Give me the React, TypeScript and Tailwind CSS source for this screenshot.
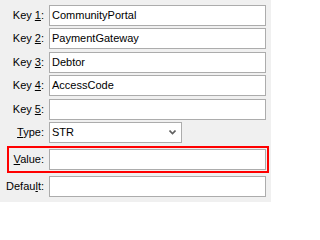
import React from 'react';

const FONT = { fontFamily: '"Liberation Sans", Arial, sans-serif' };

const Label: React.FC<{ pre: string; key_: string; post: string; w: string }> = ({ pre, key_, post, w }) => (
  <span className={`${w} text-right text-[11px] text-black leading-none whitespace-pre`}>
    {pre}
    <u className="underline-offset-[1px]">{key_}</u>
    {post}
  </span>
);

const TextBox: React.FC<{ value?: string }> = ({ value }) => (
  <div className="w-[217px] h-[21px] bg-white border border-[#acacac] flex items-center px-[2px] text-[11px] text-black">
    {value}
  </div>
);

const Row: React.FC<{ pre: string; k: string; post: string; value?: string; mt: string }> = ({ pre, k, post, value, mt }) => (
  <div className={`flex items-center gap-[5px] ${mt}`}>
    <Label pre={pre} key_={k} post={post} w="w-[44px]" />
    <TextBox value={value} />
  </div>
);

export default function App() {
  return (
    <div className="w-[271px] h-[202px] bg-[#f0f0f0] pt-[5px] overflow-hidden" style={FONT}>
      <Row pre="Key " k="1" post=":" value="CommunityPortal" mt="" />
      <Row pre="Key " k="2" post=":" value="PaymentGateway" mt="mt-[2px]" />
      <Row pre="Key " k="3" post=":" value="Debtor" mt="mt-[3px]" />
      <Row pre="Key " k="4" post=":" value="AccessCode" mt="mt-[2px]" />
      <Row pre="Key " k="5" post=":" mt="mt-[3px]" />
      <div className="flex items-center gap-[5px] mt-[2px]">
        <Label pre="" key_="T" post="ype:" w="w-[44px]" />
        <div className="w-[133px] h-[21px] bg-white border border-[#acacac] flex items-center justify-between pl-[2px] pr-[5px] text-[11px] text-black">
          <span>STR</span>
          <svg width="7" height="5" viewBox="0 0 7 5">
            <path d="M0.5 0.5 L3.5 3.5 L6.5 0.5" stroke="#606060" strokeWidth="1.6" fill="none" />
          </svg>
        </div>
      </div>
      <div className="ml-[7px] mt-[3px] w-[262px] h-[27px] border-2 border-[#ff0000] flex items-center gap-[5px] pr-[1px]">
        <Label pre="" key_="V" post="alue:" w="w-[35px]" />
        <TextBox />
      </div>
      <div className="flex items-center gap-[5px] mt-[3px]">
        <Label pre="Defau" key_="l" post="t:" w="w-[44px]" />
        <TextBox />
      </div>
    </div>
  );
}
